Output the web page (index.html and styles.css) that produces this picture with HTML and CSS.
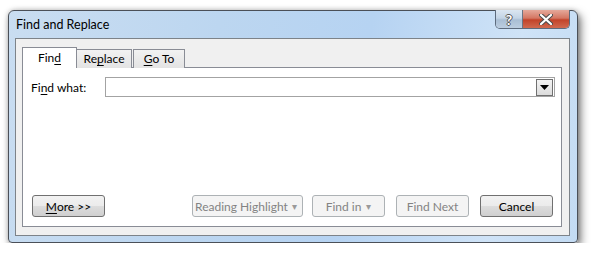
FILE: index.html
```html
<!DOCTYPE html>
<html lang="en">
<head>
    <meta charset="UTF-8">
    <title>Find and Replace</title>
    <link rel="stylesheet" href="styles.css">
</head>
<body>

<div class="window">
    <div class="titlebar">
        <div class="title">Find and Replace</div>
        <div class="caption-buttons">
            <div class="cap-btn help">?</div>
            <div class="cap-btn close">
                <svg width="14" height="11" viewBox="0 0 14 11">
                    <path d="M2 1 L12 10 M12 1 L2 10" stroke="#4d4d4d" stroke-width="4.2" stroke-linecap="round"/>
                    <path d="M2 1 L12 10 M12 1 L2 10" stroke="#ffffff" stroke-width="2.2" stroke-linecap="round"/>
                </svg>
            </div>
        </div>
    </div>

    <div class="client">
        <div class="tabs">
            <div class="tab active">Fin<u>d</u></div>
            <div class="tab">Re<u>p</u>lace</div>
            <div class="tab"><u>G</u>o To</div>
        </div>

        <div class="panel">
            <div class="find-row">
                <label class="label">Fi<u>n</u>d what:</label>
                <div class="combo">
                    <div class="combo-arrow">
                        <svg width="9" height="5" viewBox="0 0 9 5"><path d="M0 0 H9 L4.5 5 Z" fill="#000"/></svg>
                    </div>
                </div>
            </div>

            <div class="button-row">
                <div class="btn more"><u>M</u>ore &gt;&gt;</div>
                <div class="btn disabled reading">Reading Highlight <span class="arrow">&#9662;</span></div>
                <div class="btn disabled findin">Find in <span class="arrow">&#9662;</span></div>
                <div class="btn disabled">Find Next</div>
                <div class="btn cancel">Cancel</div>
            </div>
        </div>
    </div>
</div>

</body>
</html>
```

FILE: styles.css
```css
* {
    box-sizing: border-box;
}

body {
    margin: 0;
    padding: 10px 0 0 8px;
    background: #ffffff;
    font-family: Lato, "Open Sans", sans-serif;
    font-size: 12px;
    color: #000000;
    white-space: nowrap;
}

u {
    text-decoration: underline;
    text-underline-offset: 2px;
}

.window {
    width: 570px;
    height: 233px;
    border: 1px solid #4b5058;
    border-radius: 6px 6px 4px 4px;
    background: linear-gradient(100deg, #c9ddf1 0%, #bcd6f0 35%, #b6d3f2 60%, #cfe3f7 85%, #c3dbf3 100%);
    box-shadow: 3px 4px 9px rgba(0, 0, 0, 0.5), 0 0 5px rgba(0, 0, 0, 0.2);
    display: flex;
    flex-direction: column;
}

.titlebar {
    height: 27px;
    display: flex;
    align-items: flex-start;
    padding-left: 7px;
    padding-right: 7px;
}

.title {
    padding-top: 6px;
    font-size: 12.5px;
    color: #000;
}

.caption-buttons {
    margin-left: auto;
    display: flex;
    height: 19px;
    margin-top: -1px;
    border: 1px solid #5d6b7d;
    border-top: none;
    border-radius: 0 0 5px 5px;
    overflow: hidden;
}

.cap-btn {
    height: 18px;
    display: flex;
    align-items: center;
    justify-content: center;
}

.help {
    width: 27px;
    background: linear-gradient(#dbe6f1 0%, #c3d4e5 45%, #a9bed4 55%, #bccde0 100%);
    border-right: 1px solid #6b7685;
    color: #ffffff;
    font-weight: bold;
    font-size: 14px;
    text-shadow: 1px 0 0 #555, -1px 0 0 #555, 0 1px 0 #555, 0 -1px 0 #555;
}

.close {
    width: 46px;
    background: linear-gradient(#e5a99b 0%, #d47763 45%, #c2432a 55%, #d0694f 100%);
}

.client {
    flex: 1;
    margin: 0 7px 6px 6px;
    background: #f0f0f0;
    border: 1px solid #7d8389;
    padding: 8px 7px 8px 6px;
    display: flex;
    flex-direction: column;
}

.tabs {
    display: flex;
    align-items: flex-end;
    height: 21px;
    margin-bottom: -1px;
    position: relative;
    z-index: 1;
}

.tab {
    height: 19px;
    border: 1px solid #898c95;
    border-bottom: none;
    background: linear-gradient(#f2f2f2, #e3e3e3);
    line-height: 17px;
    text-align: center;
}

.tab.active {
    height: 21px;
    width: 55px;
    background: #ffffff;
    line-height: 20px;
}

.tab:nth-child(2) {
    width: 55px;
    border-left: none;
}

.tab:nth-child(3) {
    width: 52px;
    margin-left: 1px;
}

.panel {
    flex: 1;
    background: #ffffff;
    border: 1px solid #898c95;
    padding: 9px 6px 9px 7px;
    display: flex;
    flex-direction: column;
}

.find-row {
    display: flex;
    align-items: center;
}

.label {
    width: 75px;
    padding-left: 1px;
}

.combo {
    width: 450px;
    height: 20px;
    border: 1px solid #a3a3a3;
    background: #ffffff;
    display: flex;
    justify-content: flex-end;
    align-items: center;
    padding-right: 1px;
}

.combo-arrow {
    width: 17px;
    height: 17px;
    border: 1px solid #707070;
    background: linear-gradient(#f3f3f3, #dcdcdc);
    display: flex;
    align-items: center;
    justify-content: center;
}

.button-row {
    margin-top: auto;
    display: flex;
    padding-left: 2px;
    padding-right: 2px;
}

.btn {
    width: 73px;
    height: 22px;
    border: 1px solid #707070;
    border-radius: 3px;
    background: linear-gradient(#f2f2f2 0%, #ebebeb 50%, #dddddd 51%, #cfcfcf 100%);
    display: flex;
    align-items: center;
    justify-content: center;
    margin-left: 11px;
}

.btn.more {
    margin-left: 0;
}

.btn.disabled {
    border-color: #adb2b5;
    background: #f4f4f4;
    color: #838383;
}

.btn.reading {
    width: 111px;
    margin-left: auto;
    justify-content: flex-start;
    padding-left: 2px;
}

.btn.reading .arrow {
    margin-left: auto;
    margin-right: 5px;
}

.btn.findin {
    margin-left: 9px;
}

.arrow {
    font-size: 10px;
    color: #9a9a9a;
    margin-left: 5px;
}
```
